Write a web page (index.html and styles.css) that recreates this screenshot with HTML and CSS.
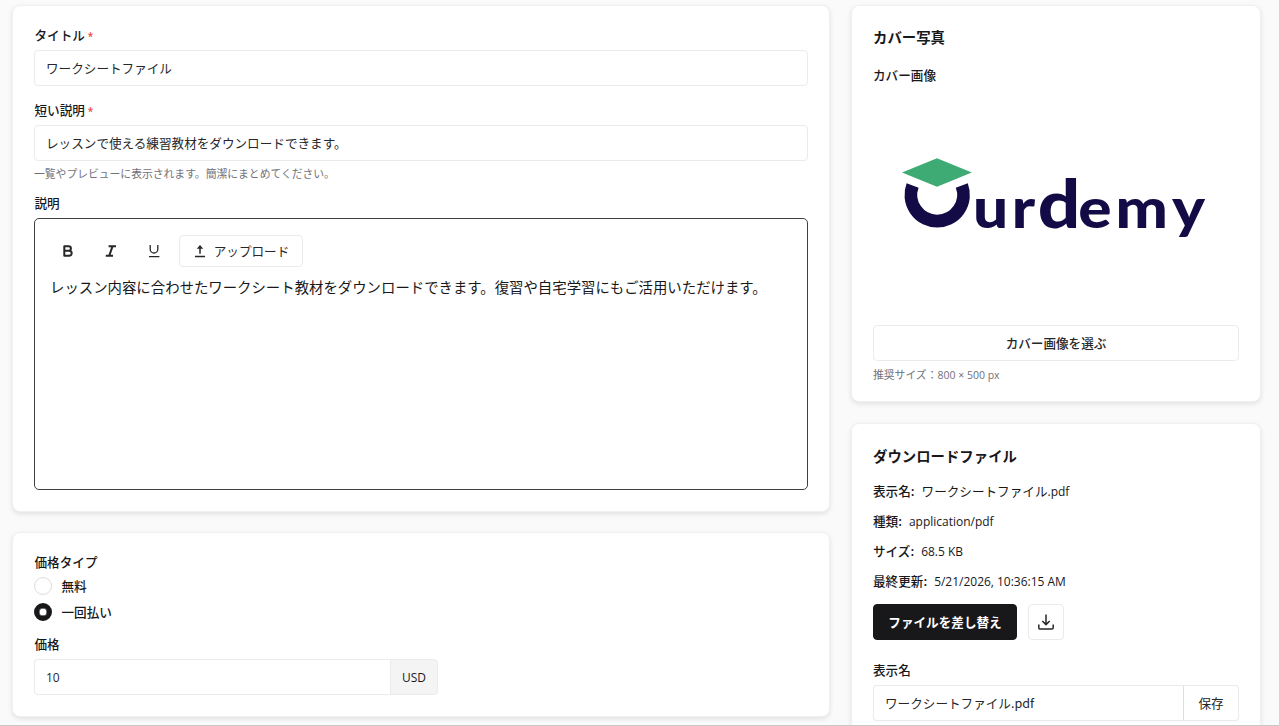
FILE: index.html
```html
<!DOCTYPE html>
<html lang="ja">
<head>
  <meta charset="UTF-8" />
  <meta name="viewport" content="width=device-width, initial-scale=1">
  <title>ワークシートファイル</title>
  <link rel="stylesheet" href="styles.css">
</head>

<body>
  <div class="page">
    <main class="column main">
      <section class="card">
        <label class="label" for="title">タイトル <span class="required">*</span></label>
        <input class="input" type="text" id="title" value="ワークシートファイル" />

        <label class="label next" for="short">短い説明 <span class="required">*</span></label>
        <input class="input" type="text" id="short" value="レッスンで使える練習教材をダウンロードできます。" />
        <p class="help">一覧やプレビューに表示されます。簡潔にまとめてください。</p>

        <div class="label description">説明</div>
        <div class="editor">
          <div class="toolbar">
            <button class="tool" aria-label="太字">
              <svg width="14" height="14" viewBox="0 0 14 14"><path d="M3.3 2.2H7.6a2.3 2.3 0 0 1 0 4.6H3.3zM3.3 6.8H8.2a2.5 2.5 0 0 1 0 5H3.3z" fill="none" stroke="currentColor" stroke-width="2" stroke-linejoin="round"/></svg>
            </button>
            <button class="tool" aria-label="斜体">
              <svg width="14" height="14" viewBox="0 0 14 14"><path d="M4.6 2.2h7.4M1.8 11.8h7.2M8.6 2.2L5.2 11.8" fill="none" stroke="currentColor" stroke-width="2"/></svg>
            </button>
            <button class="tool" aria-label="下線">
              <svg width="14" height="14" viewBox="0 0 14 14"><path d="M3.2 1v4.2a3.8 3.8 0 0 0 7.6 0V1M2 12.6h10.4" fill="none" stroke="currentColor" stroke-width="1.3"/></svg>
            </button>
            <button class="upload">
              <svg width="12" height="14" viewBox="0 0 12 14"><path d="M6 9.8V3M1 12.5h10" fill="none" stroke="currentColor" stroke-width="1.5"/><path d="M2.8 4.8L6 1l3.2 3.8z" fill="currentColor"/></svg>
              アップロード
            </button>
          </div>
          <div class="content">レッスン内容に合わせたワークシート教材をダウンロードできます。復習や自宅学習にもご活用いただけます。</div>
        </div>
      </section>

      <section class="card">
        <div class="label">価格タイプ</div>
        <label class="radio"><input type="radio" name="price-type" />無料</label>
        <label class="radio"><input type="radio" name="price-type" checked />一回払い</label>

        <label class="label price" for="price">価格</label>
        <div class="group price-group">
          <input class="input" type="text" id="price" value="10" />
          <span class="unit">USD</span>
        </div>
      </section>
    </main>

    <aside class="column">
      <section class="card cover-card">
        <h2>カバー写真</h2>
        <div class="label cover-label">カバー画像</div>
        <svg class="cover" viewBox="0 -1 366 229" role="img" aria-label="Ourdemy">
          <path d="M29 81.5L64 67.3L98.8 81.5L64 95.8z" fill="#3fab74"/>
          <path d="M39.6 94.5A26.3 26.3 0 1 0 88.8 94.5" fill="none" stroke="#130b45" stroke-width="12.8"/>
          <text class="logo-text" transform="scale(1.13 1)" x="88.6 122.7 145.8 181.6 214.7 264.6" y="137">ur<tspan class="logo-tall">d</tspan>emy</text>
        </svg>
        <button class="button wide">カバー画像を選ぶ</button>
        <p class="help">推奨サイズ：<span class="latin">800 × 500 px</span></p>
      </section>

      <section class="card file-card">
        <h2>ダウンロードファイル</h2>
        <dl class="details">
          <div><dt>表示名:</dt><dd>ワークシートファイル<span class="latin">.pdf</span></dd></div>
          <div><dt>種類:</dt><dd class="latin">application/pdf</dd></div>
          <div><dt>サイズ:</dt><dd class="latin">68.5 KB</dd></div>
          <div><dt>最終更新:</dt><dd class="latin">5/21/2026, 10:36:15 AM</dd></div>
        </dl>
        <div class="actions">
          <button class="button primary">ファイルを差し替え</button>
          <button class="button square" aria-label="ダウンロード">
            <svg width="18" height="18" viewBox="0 0 18 18"><path d="M9 1.5v10M5.3 8L9 11.6 12.7 8M1.8 11.5v3.2a1.4 1.4 0 0 0 1.4 1.4h11.6a1.4 1.4 0 0 0 1.4-1.4v-3.2" fill="none" stroke="currentColor" stroke-width="1.5"/></svg>
          </button>
        </div>
        <label class="label" for="filename">表示名</label>
        <div class="group">
          <input class="input" type="text" id="filename" value="ワークシートファイル.pdf" />
          <button class="save">保存</button>
        </div>
      </section>
    </aside>
  </div>
</body>
</html>
```
FILE: styles.css
```css
* {
  box-sizing: border-box;
}

body {
  margin: 0;
  background: #fafafa;
  color: #18181b;
  font-family: "Noto Sans CJK JP", sans-serif;
  font-size: 12.6px;
  line-height: 16px;
}

.page {
  display: grid;
  grid-template-columns: 818px 410px;
  gap: 21px;
  height: 726px;
  padding: 5px 0 0 12px;
  overflow: hidden;
  border-bottom: 1px solid #c8c8c8;
}

.column {
  display: flex;
  flex-direction: column;
  gap: 21px;
}

.main {
  gap: 20px;
}

.card {
  flex: none;
  padding: 21px;
  background: #fff;
  border: 1px solid #f0f0f1;
  border-radius: 8px;
  box-shadow: 0 2px 5px rgba(0, 0, 0, 0.1);
}

h2 {
  margin: 0;
  font-size: 14.4px;
  line-height: 20px;
  font-weight: 700;
}

.label {
  display: block;
  height: 16px;
  margin-bottom: 7px;
  font-weight: 500;
}

.main .label {
  padding-left: 0.5px;
}

.label.next {
  margin-top: 16px;
}

.required {
  color: #ef4444;
  font-family: "Open Sans", sans-serif;
  font-size: 10px;
  font-weight: 600;
  line-height: 1;
}

.input {
  display: block;
  width: 100%;
  height: 36px;
  padding: 0 11px 1px;
  background: #fff;
  border: 1px solid #ebebed;
  border-radius: 4px;
  color: #27272a;
  font-family: "Noto Sans CJK JP", sans-serif;
  font-size: 12.6px;
}

.help {
  margin: 4px 0 0;
  color: #71717a;
  font-size: 10.8px;
}

.latin,
.unit,
#price {
  font-family: "Open Sans", sans-serif;
  font-size: 0.95em;
}

#price {
  padding-bottom: 0;
  font-size: 12px;
}

.description {
  margin-top: 14px;
}

.editor {
  height: 272px;
  padding: 16px 15px;
  border: 1px solid #3f3f46;
  border-radius: 5px;
}

.toolbar {
  display: flex;
  align-items: center;
  height: 32px;
}

button {
  padding: 0;
  background: #fff;
  border: 1px solid #ebebed;
  border-radius: 4px;
  color: #27272a;
  font: inherit;
}

.tool {
  display: flex;
  align-items: center;
  justify-content: center;
  width: 35px;
  height: 32px;
  margin-right: 8px;
  border: 0;
}

.upload {
  display: flex;
  align-items: center;
  justify-content: center;
  gap: 8px;
  width: 124px;
  height: 32px;
  padding-left: 1px;
}

.content {
  margin-top: 8px;
  font-size: 14.4px;
  line-height: 24px;
}

.radio {
  display: flex;
  align-items: center;
  gap: 9.5px;
  height: 18px;
  margin-bottom: 8px;
  font-weight: 500;
}

.radio input {
  appearance: none;
  width: 18px;
  height: 18px;
  margin: 0;
  border: 1px solid #dedee0;
  border-radius: 50%;
}

.radio input:checked {
  border: 5px solid #18181b;
  box-shadow: inset 0 0 0 0.5px #18181b;
}

.label.price {
  margin-top: 15px;
}

.group {
  display: flex;
}

.group .input {
  flex: 1;
  border-right: 0;
  border-radius: 4px 0 0 4px;
}

.price-group {
  width: 404px;
}

.unit {
  width: 48px;
  height: 36px;
  background: #f4f4f5;
  border: 1px solid #ebebed;
  border-radius: 0 4px 4px 0;
  line-height: 35px;
  text-align: center;
}

.cover-card {
  height: 397px;
}

.cover-label {
  margin-top: 20px;
}

.cover {
  display: block;
  width: 366px;
  height: 229px;
}

.logo-text {
  fill: #130b45;
  font-family: Lato, sans-serif;
  font-size: 55px;
  font-weight: 900;
}

.logo-tall {
  font-size: 66px;
}

.button {
  height: 36px;
  font-weight: 500;
}

.wide {
  width: 100%;
  margin-top: 6px;
}

.cover-card .help {
  margin-top: 5px;
}

.cover-card .latin {
  font-size: 10.5px;
}

.file-card {
  padding-top: 22px;
}

.details {
  margin: 17px 0 15px;
}

.details div {
  display: flex;
  gap: 7px;
  height: 16px;
  margin-bottom: 14px;
}

dt {
  font-weight: 500;
}

dd {
  margin: 0;
}

dd.latin {
  line-height: 18px;
}

.actions {
  display: flex;
  gap: 11px;
  margin-bottom: 22px;
}

.primary {
  width: 144px;
  background: #18181b;
  border-color: #18181b;
  color: #fff;
  font-weight: 700;
}

.square {
  display: flex;
  align-items: center;
  justify-content: center;
  width: 36px;
}

.save {
  width: 56px;
  height: 36px;
  border-left-color: #dedee0;
  border-radius: 0 4px 4px 0;
}
```
